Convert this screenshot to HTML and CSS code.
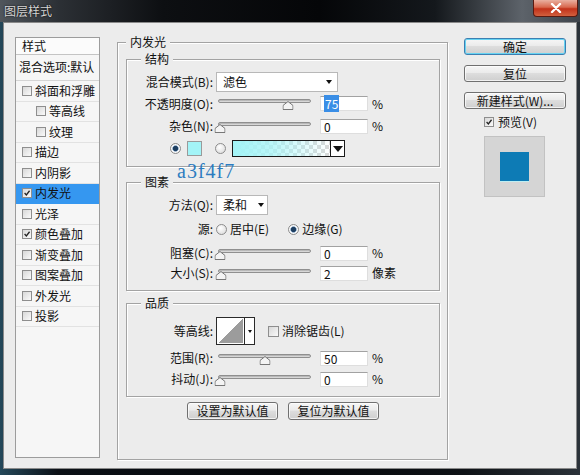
FILE: index.html
```html
<!DOCTYPE html>
<html lang="zh-CN">
<head>
<meta charset="utf-8">
<title>图层样式</title>
<link rel="stylesheet" href="styles.css">
</head>
<body>
<div class="titlebar">
  <span class="title">图层样式</span>
  <div class="close">
    <svg width="12" height="10" viewBox="0 0 12 10"><path d="M2 1 L10 9 M10 1 L2 9" stroke="#fff" stroke-width="2.4" stroke-linecap="round"/></svg>
  </div>
</div>
<div class="dialog">
  <div class="stylelist">
    <div class="list-head">样式</div>
    <div class="list-blend">混合选项:默认</div>
    <div class="item"><span class="cb"></span>斜面和浮雕</div>
    <div class="item sub"><span class="cb"></span>等高线</div>
    <div class="item sub"><span class="cb"></span>纹理</div>
    <div class="item"><span class="cb"></span>描边</div>
    <div class="item"><span class="cb"></span>内阴影</div>
    <div class="item selected"><span class="cb"><svg viewBox="0 0 10 10"><path d="M2 5 L4.2 7.4 L8.2 2.2" fill="none" stroke="#222" stroke-width="1.6"/></svg></span>内发光</div>
    <div class="item"><span class="cb"></span>光泽</div>
    <div class="item"><span class="cb"><svg viewBox="0 0 10 10"><path d="M2 5 L4.2 7.4 L8.2 2.2" fill="none" stroke="#222" stroke-width="1.6"/></svg></span>颜色叠加</div>
    <div class="item"><span class="cb"></span>渐变叠加</div>
    <div class="item"><span class="cb"></span>图案叠加</div>
    <div class="item"><span class="cb"></span>外发光</div>
    <div class="item"><span class="cb"></span>投影</div>
  </div>

  <fieldset class="group main">
    <legend>内发光</legend>

    <fieldset class="group sub g-structure">
      <legend>结构</legend>
      <div class="row r-blend">
        <span class="lbl">混合模式(B):</span>
        <div class="select wide"><span class="val">滤色</span><i class="arrow"></i></div>
      </div>
      <div class="row r-opacity">
        <span class="lbl">不透明度(O):</span>
        <div class="slider"><div class="track"></div><div class="rail"><svg class="thumb" style="left:75%" viewBox="0 0 11 9"><polygon points="0.5,8.5 0.5,4.5 5.5,0.5 10.5,4.5 10.5,8.5" fill="#f4f4f4" stroke="#777"/></svg></div></div>
        <div class="num"><span class="hl">75</span></div>
        <span class="unit">%</span>
      </div>
      <div class="row r-noise">
        <span class="lbl">杂色(N):</span>
        <div class="slider"><div class="track"></div><div class="rail"><svg class="thumb" style="left:0%" viewBox="0 0 11 9"><polygon points="0.5,8.5 0.5,4.5 5.5,0.5 10.5,4.5 10.5,8.5" fill="#f4f4f4" stroke="#777"/></svg></div></div>
        <div class="num">0</div>
        <span class="unit">%</span>
      </div>
      <div class="row r-color">
        <span class="radio on"></span>
        <span class="swatch"></span>
        <span class="radio r2"></span>
        <div class="gradient">
          <div class="grad-fill"></div>
          <div class="grad-arrow"><i class="arrow big"></i></div>
        </div>
      </div>
    </fieldset>

    <fieldset class="group sub g-elements">
      <legend>图素</legend>
      <div class="row r-method">
        <span class="lbl">方法(Q):</span>
        <div class="select narrow"><span class="val">柔和</span><i class="arrow"></i></div>
      </div>
      <div class="row r-source">
        <span class="lbl">源:</span>
        <span class="radio"></span><span class="opt">居中(E)</span>
        <span class="radio on r-edge"></span><span class="opt">边缘(G)</span>
      </div>
      <div class="row r-choke">
        <span class="lbl">阻塞(C):</span>
        <div class="slider"><div class="track"></div><div class="rail"><svg class="thumb" style="left:0%" viewBox="0 0 11 9"><polygon points="0.5,8.5 0.5,4.5 5.5,0.5 10.5,4.5 10.5,8.5" fill="#f4f4f4" stroke="#777"/></svg></div></div>
        <div class="num">0</div>
        <span class="unit">%</span>
      </div>
      <div class="row r-size">
        <span class="lbl">大小(S):</span>
        <div class="slider"><div class="track"></div><div class="rail"><svg class="thumb" style="left:1%" viewBox="0 0 11 9"><polygon points="0.5,8.5 0.5,4.5 5.5,0.5 10.5,4.5 10.5,8.5" fill="#f4f4f4" stroke="#777"/></svg></div></div>
        <div class="num">2</div>
        <span class="unit">像素</span>
      </div>
    </fieldset>

    <fieldset class="group sub g-quality">
      <legend>品质</legend>
      <div class="row r-contour">
        <span class="lbl">等高线:</span>
        <div class="contour"><div class="contour-img"></div><div class="contour-arrow"><i class="arrow small"></i></div></div>
        <span class="cb aa"></span><span class="opt">消除锯齿(L)</span>
      </div>
      <div class="row r-range">
        <span class="lbl">范围(R):</span>
        <div class="slider"><div class="track"></div><div class="rail"><svg class="thumb" style="left:50%" viewBox="0 0 11 9"><polygon points="0.5,8.5 0.5,4.5 5.5,0.5 10.5,4.5 10.5,8.5" fill="#f4f4f4" stroke="#777"/></svg></div></div>
        <div class="num">50</div>
        <span class="unit">%</span>
      </div>
      <div class="row r-jitter">
        <span class="lbl">抖动(J):</span>
        <div class="slider"><div class="track"></div><div class="rail"><svg class="thumb" style="left:0%" viewBox="0 0 11 9"><polygon points="0.5,8.5 0.5,4.5 5.5,0.5 10.5,4.5 10.5,8.5" fill="#f4f4f4" stroke="#777"/></svg></div></div>
        <div class="num">0</div>
        <span class="unit">%</span>
      </div>
    </fieldset>

    <div class="defaults">
      <div class="btn wide-btn">设置为默认值</div>
      <div class="btn wide-btn">复位为默认值</div>
    </div>
  </fieldset>

  <div class="side">
    <div class="btn primary">确定</div>
    <div class="btn">复位</div>
    <div class="btn">新建样式(W)...</div>
    <div class="preview-row"><span class="cb"><svg viewBox="0 0 10 10"><path d="M2 5 L4.2 7.4 L8.2 2.2" fill="none" stroke="#222" stroke-width="1.6"/></svg></span>预览(V)</div>
    <div class="preview"><div class="preview-swatch"></div></div>
  </div>
</div>
<div class="annotation">a3f4f7</div>
</body>
</html>
```

FILE: styles.css
```css
* { box-sizing: border-box; }
html, body { margin: 0; padding: 0; }
body {
  width: 580px;
  height: 475px;
  overflow: hidden;
  position: relative;
  background: linear-gradient(90deg, #24485a 0%, #0b1016 10%, #05070a 50%, #0e1216 80%, #2b3239 100%);
  font-family: "Noto Sans CJK SC", "Noto Sans", sans-serif;
  font-size: 12px;
  line-height: 14px;
  color: #111;
}

/* title bar */
.titlebar {
  height: 22px;
  display: flex;
  justify-content: space-between;
  align-items: flex-start;
  background: linear-gradient(90deg, #50565c 0%, #2c3035 10%, #0d0f12 28%, #050608 55%, #14181c 75%, #5d636a 90%, #3d434a 100%);
}
.title {
  margin: 4px 0 0 4px;
  color: #d6d6d6;
  font-size: 12px;
  line-height: 14px;
  text-shadow: 0 0 2px #000;
}
.close {
  width: 45px;
  height: 17px;
  margin-right: 2px;
  border: 1px solid #5a1a10;
  border-top: none;
  border-radius: 0 0 4px 4px;
  background: linear-gradient(#e9b0a0 0%, #d8684e 45%, #c2321a 55%, #d2603e 100%);
  display: flex;
  align-items: center;
  justify-content: center;
}

/* dialog body */
.dialog {
  height: 447px;
  margin: 0 3px;
  padding-left: 11px;
  background: #ececec;
  border: 1px solid #8a8a8a;
  display: flex;
  align-items: flex-start;
}

/* style list */
.stylelist {
  width: 85px;
  height: 421px;
  margin-top: 14px;
  border: 1px solid #9c9c9c;
  background: #f6f6f6;
}
.list-head {
  height: 17px;
  padding-left: 6px;
  line-height: 16px;
  background: #fbfbfb;
  border-bottom: 1px solid #c4c4c4;
}
.list-blend {
  height: 26px;
  padding: 5px 0 0 3px;
  line-height: 14px;
  border-bottom: 1px solid #d4d4d4;
  white-space: nowrap;
}
.item {
  height: 20.5px;
  display: flex;
  align-items: center;
  padding-left: 6px;
  border-bottom: 1px solid #e2e2e2;
  white-space: nowrap;
}
.item.sub { padding-left: 20px; }
.item.selected { background: #3597f0; border-bottom-color: #3597f0; }

.cb {
  flex: none;
  width: 10px;
  height: 10px;
  margin-right: 3px;
  border: 1px solid #8e8e8e;
  background: linear-gradient(135deg, #d8d8d8, #fafafa);
  display: inline-flex;
}
.cb svg { width: 100%; height: 100%; }

/* group boxes */
.group {
  margin: 0;
  border: 1px solid #a3a3a3;
  box-shadow: 1px 1px 0 #fff, inset 1px 1px 0 #fff;
  min-inline-size: 0;
}
.group > legend {
  padding: 0 4px;
  line-height: 14px;
  background: #ececec;
}
.main {
  width: 331px;
  height: 425px;
  margin: 12px 0 0 17px;
  padding: 3px 7px 0 8px;
}
.main > legend { margin-left: 0; }
.sub { padding: 0; }
.sub > legend { margin-left: 14px; }
.g-structure { height: 115px; }
.g-elements { height: 116px; margin-top: 8px; }
.g-quality { height: 101px; margin-top: 5px; }

/* rows */
.row {
  display: flex;
  align-items: center;
  white-space: nowrap;
}
.lbl {
  flex: none;
  width: 86px;
  margin-right: 3px;
  text-align: right;
}
.r-blend { margin-top: 6px; height: 20px; }
.r-opacity { height: 23px; }
.r-noise { height: 22px; }
.r-color { height: 23px; padding-left: 43px; }
.r-method { margin-top: 6px; height: 20px; }
.r-source { height: 28px; }
.r-choke { height: 20px; }
.r-size { height: 20px; }
.r-contour { margin-top: 7px; height: 28px; }
.r-range { margin-top: 2px; height: 22px; }
.r-jitter { height: 20px; }

/* select */
.select {
  flex: none;
  height: 20px;
  display: flex;
  align-items: center;
  padding-left: 6px;
  background: #fff;
  border: 1px solid #b8b8b8;
}
.select .val { flex: 1; }
.select.wide { width: 122px; }
.select.wide .arrow { margin-right: 5px; }
.select.narrow { width: 52px; }
.select.narrow .arrow { margin-right: 3px; }
.arrow {
  width: 0;
  height: 0;
  border-left: 3.5px solid transparent;
  border-right: 3.5px solid transparent;
  border-top: 4px solid #111;
}
.arrow.big {
  border-left-width: 5px;
  border-right-width: 5px;
  border-top-width: 6px;
}
.arrow.small {
  border-left-width: 2.5px;
  border-right-width: 2.5px;
  border-top-width: 3px;
}

/* slider */
.slider {
  flex: none;
  position: relative;
  width: 95px;
  height: 15px;
}
.track {
  margin: 3px 0 0 2px;
  height: 4px;
  border: 1px solid #8f8f8f;
  border-radius: 2px;
  background: linear-gradient(#a9a9a9, #e6e6e6);
}
.rail {
  position: absolute;
  left: 4px;
  right: 1px;
  top: 5px;
  height: 9px;
}
.thumb {
  position: absolute;
  top: 0;
  width: 11px;
  height: 9px;
  transform: translateX(-50%);
}

/* numeric field */
.num {
  flex: none;
  width: 48px;
  height: 15px;
  margin-left: 9px;
  padding-left: 3px;
  background: #fff;
  border: 1px solid #dedede;
  border-top-color: #a2a2a2;
  line-height: 13px;
}
.hl { background: #3a8ee6; color: #fff; padding: 0 1px; }
.unit { margin-left: 4px; }

/* radios */
.radio {
  flex: none;
  width: 11px;
  height: 11px;
  border-radius: 50%;
  border: 1px solid #8c8c8c;
  background: radial-gradient(circle at 40% 35%, #ffffff, #d6d6d6);
}
.radio.on {
  background: radial-gradient(circle, #1d3e60 0 2.2px, #7f9fc0 2.8px, #ffffff 3.6px, #dadada 100%);
}
.opt { margin-left: 3px; }
.r-edge { margin-left: 19px; }

/* colour row */
.swatch {
  flex: none;
  width: 15px;
  height: 15px;
  margin-left: 6px;
  background: #a3f4f7;
  border: 1px solid #9a9a9a;
}
.radio.r2 { margin-left: 13px; }
.gradient {
  flex: none;
  width: 113px;
  height: 17px;
  margin-left: 6px;
  border: 1px solid #1a1a1a;
  display: flex;
}
.grad-fill {
  flex: 1;
  background:
    linear-gradient(90deg, #a3f4f7 0%, rgba(163, 244, 247, 0.75) 40%, rgba(163, 244, 247, 0) 100%),
    repeating-conic-gradient(#ffffff 0 25%, #d9d9d9 0 50%) 0 0 / 8px 8px;
}
.grad-arrow {
  width: 14px;
  border-left: 1px solid #1a1a1a;
  background: #fff;
  display: flex;
  align-items: center;
  justify-content: center;
}

/* contour */
.contour {
  flex: none;
  width: 39px;
  height: 28px;
  border: 1px solid #2a2a2a;
  display: flex;
  background: #fff;
}
.contour-img {
  flex: 1;
  margin: 1px;
  background: linear-gradient(to bottom right, #ffffff 50%, #9c9c9c 50%);
}
.contour-arrow {
  width: 10px;
  border-left: 1px solid #2a2a2a;
  display: flex;
  align-items: center;
  justify-content: center;
}
.cb.aa { margin-left: 13px; margin-right: 0; width: 11px; height: 11px; }

/* buttons */
.btn {
  height: 17px;
  border: 1px solid #707070;
  border-radius: 3px;
  background: linear-gradient(#f6f6f6 0%, #ebebeb 45%, #dddddd 50%, #cfcfcf 100%);
  box-shadow: inset 0 0 0 1px rgba(255, 255, 255, 0.7);
  text-align: center;
  line-height: 15px;
  white-space: nowrap;
}
.defaults {
  display: flex;
  justify-content: center;
  gap: 10px;
  margin-top: 5px;
}
.wide-btn { width: 91px; height: 18px; line-height: 16px; }

/* right column */
.side {
  width: 102px;
  margin: 15px 0 0 16px;
  display: flex;
  flex-direction: column;
  gap: 10px;
}
.btn.primary {
  border-color: #3c7fb1;
  box-shadow: inset 0 0 0 1px #66d3f2;
}
.preview-row {
  display: flex;
  align-items: center;
  height: 16px;
  margin-top: -5px;
  padding-left: 20px;
}
.preview-row .cb { margin-right: 4px; }
.preview {
  width: 61px;
  height: 61px;
  margin: -4px 0 0 20px;
  background: #d5d5d5;
  border: 1px solid #c2c2c2;
  display: flex;
  align-items: center;
  justify-content: center;
}
.preview-swatch {
  width: 29px;
  height: 29px;
  background: #0d7bb5;
  box-shadow: 0 1px 0 #bfeef2;
}

/* overlay annotation */
.annotation {
  position: absolute;
  left: 177px;
  top: 161px;
  font-family: "Liberation Serif", serif;
  font-size: 20px;
  line-height: 20px;
  letter-spacing: 1px;
  color: #2c7cc0;
}
```
